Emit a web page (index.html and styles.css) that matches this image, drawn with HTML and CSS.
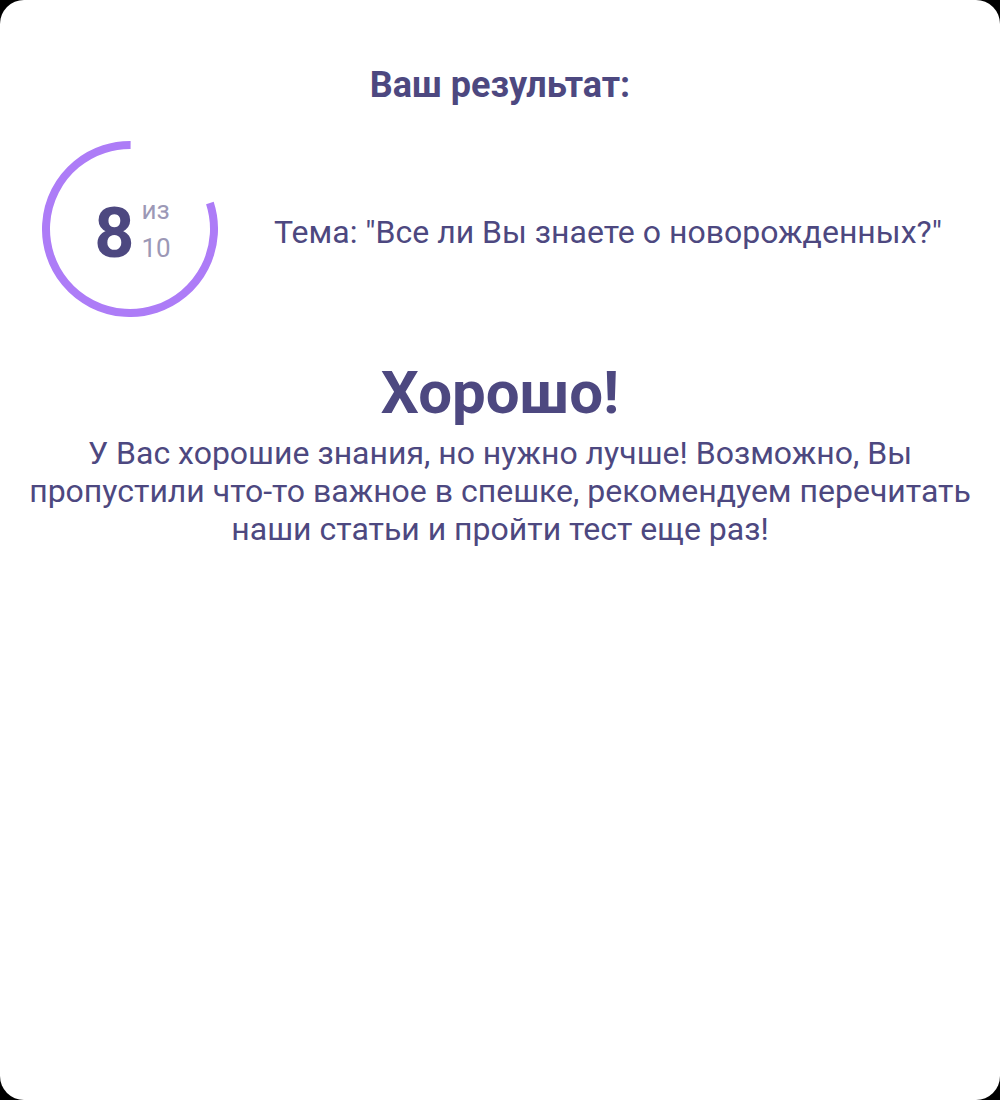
FILE: index.html
```html
<!DOCTYPE html>
<html lang="ru">
<head>
    <meta charset="UTF-8">
    <meta name="viewport" content="width=device-width, initial-scale=1.0">
    <title>Результат теста</title>
    <link rel="stylesheet" href="styles.css">
</head>
<body>
    <div class="result-card">
        <h2 class="result-title">Ваш результат:</h2>

        <div class="score-row">
            <div class="score-ring">
                <svg width="176" height="176" viewBox="0 0 176 176">
                    <!-- 8 of 10 answers: 80% of the circle, ending at 12 o'clock -->
                    <circle cx="88" cy="88" r="84" fill="none" stroke="#ad7cf7" stroke-width="8"
                            stroke-dasharray="422.23 105.56" transform="rotate(-18 88 88)"></circle>
                </svg>
                <div class="score-value">
                    <span class="score-num">8</span>
                    <span class="score-total">
                        <span>из</span>
                        <span>10</span>
                    </span>
                </div>
            </div>
            <div class="score-topic">Тема: "Все ли Вы знаете о новорожденных?"</div>
        </div>

        <h1 class="verdict">Хорошо!</h1>
        <p class="verdict-text">У Вас хорошие знания, но нужно лучше! Возможно, Вы пропустили что-то важное в спешке, рекомендуем перечитать наши статьи и пройти тест еще раз!</p>
    </div>
</body>
</html>
```

FILE: styles.css
```css
/* General styles */
body {
    margin: 0;
    padding: 0;
    background-color: #000000;
    font-family: Roboto, "Noto Sans", Arial, sans-serif;
    color: var(--text-main);
}

:root {
    --text-main: #4d4880;
    --text-muted: #9c98b6;
    --accent: #ad7cf7;
}

.result-card {
    height: 1100px;
    box-sizing: border-box;
    background-color: #ffffff;
    border-radius: 24px;
    padding: 64px 20px 0;
}

.result-title {
    margin: 0;
    text-align: center;
    font-size: 36px;
    font-weight: 700;
    line-height: 42px;
}

/* Score ring and topic */
.score-row {
    display: flex;
    align-items: center;
    margin-top: 35px;
    padding-left: 22px;
}

.score-ring {
    position: relative;
    width: 176px;
    height: 176px;
    flex-shrink: 0;
}

.score-ring svg {
    display: block;
}

.score-value {
    position: absolute;
    inset: 0;
    display: flex;
    justify-content: center;
    align-items: center;
    gap: 7px;
    padding-left: 5px;
}

.score-num {
    margin-top: 8px;
    font-size: 70px;
    font-weight: 700;
    line-height: 1;
}

.score-total {
    display: flex;
    flex-direction: column;
    font-size: 26px;
    line-height: 38px;
    color: var(--text-muted);
}

.score-topic {
    margin-left: 56px;
    margin-top: 6px;
    font-size: 32px;
}

/* Verdict */
.verdict {
    margin: 41px 0 0;
    text-align: center;
    font-size: 60px;
    font-weight: 700;
    line-height: 70px;
}

.verdict-text {
    margin: 6px 0 0;
    text-align: center;
    font-size: 32px;
    line-height: 38px;
}
```
